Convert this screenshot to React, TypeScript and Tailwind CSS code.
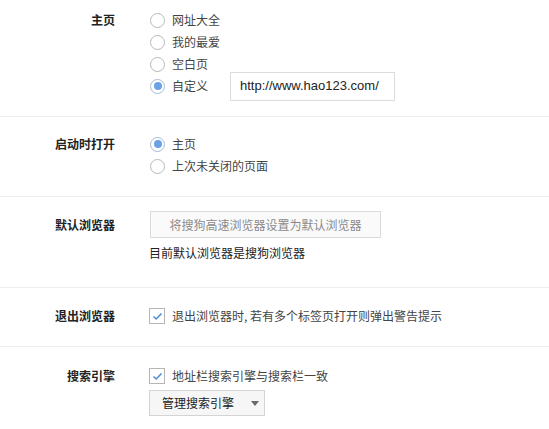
import type { ReactNode } from "react";

const font = "font-['Noto_Sans_CJK_SC','Noto_Sans',sans-serif]";

function Section({
  label,
  labelClass = "leading-[22px]",
  className,
  children,
}: {
  label: string;
  labelClass?: string;
  className: string;
  children: ReactNode;
}) {
  return (
    <div className={`flex border-b border-[#efefef] ${className}`}>
      <div
        className={`w-[115px] shrink-0 text-right text-[12px] font-bold text-[#222] ${labelClass}`}
      >
        {label}
      </div>
      <div className="ml-[34px] flex flex-col">{children}</div>
    </div>
  );
}

function Radio({ text, checked }: { text: string; checked?: boolean }) {
  return (
    <div className="flex h-[22px] items-center">
      <span
        className={`ml-px flex h-[15px] w-[15px] items-center justify-center rounded-full border bg-white ${
          checked ? "border-[#a9bcd3]" : "border-[#b9b9b9]"
        }`}
      >
        {checked && <span className="h-[8px] w-[8px] rounded-full bg-[#69a3e6]" />}
      </span>
      <span className="ml-[7px] text-[12px] text-[#444]">{text}</span>
    </div>
  );
}

function Checkbox({ text }: { text: string }) {
  return (
    <div className="flex h-[22px] items-center">
      <span className="flex h-[16px] w-[16px] items-center justify-center border border-[#b5b5b5] bg-white">
        <svg width="11" height="9" viewBox="0 0 11 9">
          <path d="M1.5 4.5 L4.2 7 L9.5 1.5" fill="none" stroke="#4f8fd8" strokeWidth="1.6" />
        </svg>
      </span>
      <span className="ml-[7px] text-[12px] text-[#444]">{text}</span>
    </div>
  );
}

export default function App() {
  return (
    <div className={`h-[429px] w-[549px] overflow-hidden bg-white ${font}`}>
      {/* 主页 */}
      <Section label="主页" className="pt-[9px] pb-[19px]">
        <Radio text="网址大全" />
        <Radio text="我的最爱" />
        <Radio text="空白页" />
        <div className="flex h-[22px] items-center">
          <Radio text="自定义" checked />
          <div className="-my-[4px] ml-[22px] flex h-[29px] w-[165px] items-center border border-[#dcdcdc] bg-white pl-[9px] font-['Liberation_Sans',sans-serif] text-[13px] text-[#222]">
            http://www.hao123.com/
          </div>
        </div>
      </Section>

      {/* 启动时打开 */}
      <Section label="启动时打开" className="pt-[16px] pb-[19px]">
        <Radio text="主页" checked />
        <Radio text="上次未关闭的页面" />
      </Section>

      {/* 默认浏览器 */}
      <Section label="默认浏览器" labelClass="leading-[27px]" className="pt-[14px] pb-[24px]">
        <button className="ml-px flex h-[27px] w-[231px] items-center justify-center border border-[#dadada] bg-[#fafafa] text-[12px] text-[#8a8a8a]">
          将搜狗高速浏览器设置为默认浏览器
        </button>
        <div className="mt-[5px] text-[12px] leading-[20px] text-[#222]">
          目前默认浏览器是搜狗浏览器
        </div>
      </Section>

      {/* 退出浏览器 */}
      <Section label="退出浏览器" className="pt-[17px] pb-[19px]">
        <Checkbox text="退出浏览器时, 若有多个标签页打开则弹出警告提示" />
      </Section>

      {/* 搜索引擎 */}
      <Section label="搜索引擎" className="border-b-0 pt-[18px]">
        <Checkbox text="地址栏搜索引擎与搜索栏一致" />
        <button className="mt-[3px] flex h-[26px] w-[116px] items-center border border-[#d4d4d4] bg-[#f6f6f6] pl-[12px] text-[12px] text-[#222]">
          管理搜索引擎
          <svg className="ml-[17px]" width="8" height="5" viewBox="0 0 8 5">
            <path d="M0 0 L8 0 L4 5 Z" fill="#6a6a6a" />
          </svg>
        </button>
      </Section>
    </div>
  );
}
